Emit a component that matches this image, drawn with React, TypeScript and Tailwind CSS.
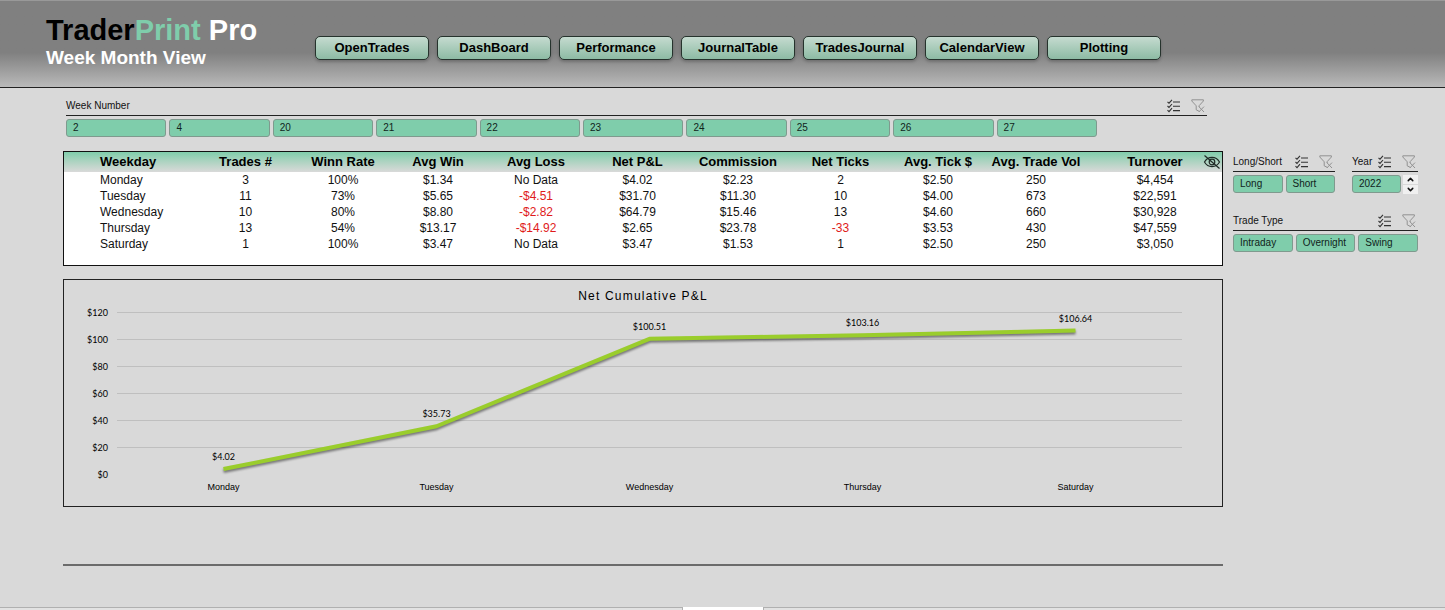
import React from 'react';
import { ChevronDown, ChevronUp } from 'lucide-react';

const navItems = [
  'OpenTrades',
  'DashBoard',
  'Performance',
  'JournalTable',
  'TradesJournal',
  'CalendarView',
  'Plotting',
];

const weekNumbers = ['2', '4', '20', '21', '22', '23', '24', '25', '26', '27'];

const columns = [
  { label: 'Weekday', width: 'w-[133px]' },
  { label: 'Trades #', width: 'w-[97px]' },
  { label: 'Winn Rate', width: 'w-[98px]' },
  { label: 'Avg Win', width: 'w-[92px]' },
  { label: 'Avg Loss', width: 'w-[104px]' },
  { label: 'Net P&L', width: 'w-[99px]' },
  { label: 'Commission', width: 'w-[102px]' },
  { label: 'Net Ticks', width: 'w-[103px]' },
  { label: 'Avg. Tick $', width: 'w-[92px]' },
  { label: 'Avg. Trade Vol', width: 'w-[104px]' },
  { label: 'Turnover', width: 'w-[134px]' },
];

const rows = [
  ['Monday', '3', '100%', '$1.34', 'No Data', '$4.02', '$2.23', '2', '$2.50', '250', '$4,454'],
  ['Tuesday', '11', '73%', '$5.65', '-$4.51', '$31.70', '$11.30', '10', '$4.00', '673', '$22,591'],
  ['Wednesday', '10', '80%', '$8.80', '-$2.82', '$64.79', '$15.46', '13', '$4.60', '660', '$30,928'],
  ['Thursday', '13', '54%', '$13.17', '-$14.92', '$2.65', '$23.78', '-33', '$3.53', '430', '$47,559'],
  ['Saturday', '1', '100%', '$3.47', 'No Data', '$3.47', '$1.53', '1', '$2.50', '250', '$3,050'],
];

const cumulative = [
  { day: 'Monday', value: 4.02 },
  { day: 'Tuesday', value: 35.73 },
  { day: 'Wednesday', value: 100.51 },
  { day: 'Thursday', value: 103.16 },
  { day: 'Saturday', value: 106.64 },
];

const ticks = [120, 100, 80, 60, 40, 20, 0];

const MultiSelectIcon = () => (
  <svg width="14" height="14" viewBox="0 0 14 14" fill="none" stroke="#333" strokeWidth="1.1">
    <path d="M0.5 2.8L2 4.2L5 0.8M0.5 7L2 8.4L5 5M0.5 11.2L2 12.6L5 9.2" />
    <path d="M6 3H13M6 7.3H13M6 11.6H13" />
  </svg>
);

const ClearFilterIcon = () => (
  <svg width="14" height="14" viewBox="0 0 14 14" fill="none" stroke="#929292" strokeWidth="1">
    <path d="M8.5 12.5L5.2 10.8V6.8L0.8 2V0.8H12.4V2L8.2 6.6V8" />
    <path d="M7.8 7.6L13 13M13 7.6L7.8 13" />
  </svg>
);

const HiddenIcon = () => (
  <svg width="18" height="16" viewBox="0 0 18 16" fill="none" stroke="#1f2b26" strokeWidth="1.2">
    <path d="M1.5 8C3.2 5 5.8 3.4 9 3.4S14.8 5 16.5 8C14.8 11 12.2 12.6 9 12.6S3.2 11 1.5 8Z" />
    <circle cx="9" cy="8" r="2.8" />
    <path d="M1.5 1.5L16.5 14.5" />
  </svg>
);

const SlicerHeader = ({ title }: { title: string }) => (
  <div className="flex h-[19px] items-center justify-between border-b border-[#222] pr-0.5">
    <h2 className="text-[10px] leading-4">{title}</h2>
    <div className="flex gap-[10px]">
      <button type="button" aria-label={`Multi-select ${title}`}>
        <MultiSelectIcon />
      </button>
      <button type="button" aria-label={`Clear filter ${title}`}>
        <ClearFilterIcon />
      </button>
    </div>
  </div>
);

const SlicerButton = ({ label }: { label: string }) => (
  <button
    type="button"
    className="h-[18px] w-full rounded-[3px] border border-[#7f9a8e] bg-[#7fcdab] pl-[6px] text-left text-[10px] leading-4 text-[#10241b]"
  >
    {label}
  </button>
);

const CumulativeChart = () => {
  const x = (i: number) => 159.5 + i * 213;
  const y = (v: number) => 194.5 - v * 1.35;
  const line = cumulative.map((p, i) => `${x(i)},${y(p.value)}`).join(' ');

  return (
    <svg className="block w-full" viewBox="0 0 1158 226" role="img" aria-label="Net Cumulative P&L">
      <text x="579" y="20" textAnchor="middle" className="fill-black text-[12px] tracking-widest">
        Net Cumulative P&L
      </text>
      {ticks.map((t) => (
        <g key={t}>
          {t > 0 && <line x1="53" x2="1118" y1={y(t)} y2={y(t)} stroke="#bfbfbf" />}
          <text x="44" y={y(t) + 3} textAnchor="end" className="fill-black font-['Lato',sans-serif] text-[9px]">
            ${t}
          </text>
        </g>
      ))}
      <polyline
        points={line}
        fill="none"
        stroke="#9acd2c"
        strokeWidth="4"
        strokeLinejoin="round"
        className="drop-shadow-[0_2px_1px_rgba(0,0,0,0.45)]"
      />
      {cumulative.map((p, i) => (
        <g key={p.day} textAnchor="middle" className="fill-black text-[9px]">
          <text x={x(i)} y={y(p.value) - 9} className="font-['Lato',sans-serif]">
            ${p.value.toFixed(2)}
          </text>
          <text x={x(i)} y="210">
            {p.day}
          </text>
        </g>
      ))}
    </svg>
  );
};

const App = () => {
  return (
    <div className="flex min-h-screen flex-col bg-[#d9d9d9] font-['Liberation_Sans',Arial,sans-serif] text-[#111]">
      <header className="flex h-[88px] border-t border-b border-t-[#999] border-b-[#222] bg-linear-to-b from-[#808080] from-60% to-[#bababa] pl-[46px]">
        <div className="w-[269px] shrink-0 pt-[13px] font-bold text-white">
          <h1 className="text-[29px] leading-8">
            <span className="text-black">Trader</span>
            <span className="text-[#7fcdab]">Print</span> Pro
          </h1>
          <p className="text-[19px] leading-6">Week Month View</p>
        </div>
        <nav className="flex gap-2 pt-[35px]">
          {navItems.map((item) => (
            <a
              key={item}
              href="#"
              className="flex h-6 w-[114px] items-center justify-center rounded-[5px] border border-[#26332d] bg-linear-to-b from-[#c5dbd0] to-[#8dbba4] text-[13px] font-bold text-black shadow-[0_2px_3px_rgba(0,0,0,0.2)]"
            >
              {item}
            </a>
          ))}
        </nav>
      </header>

      <main className="flex gap-[10px] pr-[27px] pl-[63px]">
        <div className="min-w-0 flex-1 pt-[9px]">
          <section className="pr-4 pl-[3px]">
            <SlicerHeader title="Week Number" />
            <div className="mt-[3px] grid grid-cols-10 gap-[3px] pr-[110px]">
              {weekNumbers.map((week) => (
                <SlicerButton key={week} label={week} />
              ))}
            </div>
          </section>

          <section className="relative mt-[14px] border border-[#111] bg-white pb-[13px]">
            <table className="w-full table-fixed text-center text-[12px] leading-4">
              <thead>
                <tr className="h-5 bg-linear-to-b from-[#7fcdab] to-[#d9d9d9] text-[13px] text-black">
                  {columns.map((col) => (
                    <th key={col.label} className={`${col.width} whitespace-nowrap p-0 first:pl-9 first:text-left`}>
                      {col.label}
                    </th>
                  ))}
                </tr>
              </thead>
              <tbody>
                {rows.map((row) => (
                  <tr key={row[0]}>
                    {row.map((cell, i) => (
                      <td
                        key={i}
                        className={`p-0 first:pl-9 first:text-left ${cell.startsWith('-') ? 'text-[#e01b1b]' : ''}`}
                      >
                        {cell}
                      </td>
                    ))}
                  </tr>
                ))}
              </tbody>
            </table>
            <button type="button" aria-label="Hide table" className="absolute top-[2px] right-px">
              <HiddenIcon />
            </button>
          </section>

          <section className="mt-[13px] border border-[#222]">
            <CumulativeChart />
          </section>

          <hr className="mt-[57px] border-t-2 border-[#6b6b6b]" />
        </div>

        {/* Side slicers */}
        <aside className="w-[185px] shrink-0 pt-[65px]">
          <div className="flex gap-[17px]">
            <section className="w-[102px]">
              <SlicerHeader title="Long/Short" />
              <div className="mt-[3px] grid grid-cols-2 gap-[3px]">
                <SlicerButton label="Long" />
                <SlicerButton label="Short" />
              </div>
            </section>
            <section className="flex-1">
              <SlicerHeader title="Year" />
              <div className="mt-[3px] flex gap-[2px]">
                <SlicerButton label="2022" />
                <div className="flex w-[15px] shrink-0 flex-col gap-px">
                  <button type="button" aria-label="Previous year" className="flex h-[9px] items-center justify-center bg-[#f0f0f0]">
                    <ChevronUp size={9} strokeWidth={4} />
                  </button>
                  <button type="button" aria-label="Next year" className="flex h-[9px] items-center justify-center bg-[#f0f0f0]">
                    <ChevronDown size={9} strokeWidth={4} />
                  </button>
                </div>
              </div>
            </section>
          </div>
          <section className="mt-[18px]">
            <SlicerHeader title="Trade Type" />
            <div className="mt-[3px] grid grid-cols-3 gap-[3px]">
              <SlicerButton label="Intraday" />
              <SlicerButton label="Overnight" />
              <SlicerButton label="Swing" />
            </div>
          </section>
        </aside>
      </main>

      {/* Sheet tab strip */}
      <footer className="mt-auto flex h-[3px] justify-center">
        <div className="flex-1 border-t border-[#b0b0b0] bg-[#e2e2e2]" />
        <div className="w-[82px] border-x border-[#b0b0b0] bg-white" />
        <div className="flex-1 border-t border-[#b0b0b0] bg-[#e2e2e2]" />
      </footer>
    </div>
  );
};

export default App;
